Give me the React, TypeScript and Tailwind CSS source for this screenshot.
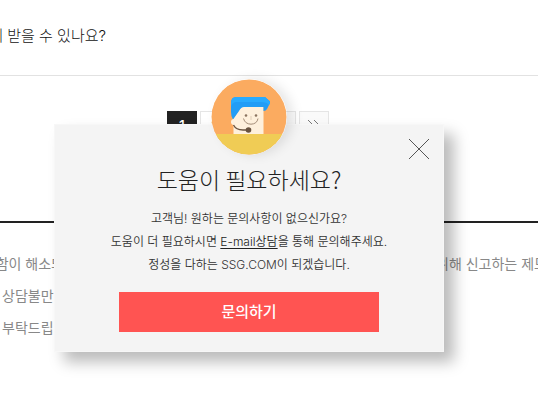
import React from "react";

function Avatar() {
  return (
    <svg
      viewBox="0 0 76 76"
      className="absolute left-1/2 -top-[46px] size-[76px] -translate-x-1/2 rounded-full shadow-[6px_0_12px_rgba(0,0,0,0.1)]"
      aria-hidden="true"
    >
      <defs>
        <clipPath id="avatar-disc">
          <circle cx="38" cy="38" r="37.5" />
        </clipPath>
      </defs>
      <g clipPath="url(#avatar-disc)">
        <rect width="76" height="76" fill="#fbab60" />
        <rect y="55" width="76" height="21" fill="#f0cc55" />
        <path d="M22 40 31 27H52.500V55H22.500V47Z" fill="#fef0dc" />
        <path
          d="M25 18H54L59 22.500V24L56 30Q55 32 52.500 32V28H33Q30 28 28 32L22 40.500Q20 38 20 33V24Q20 18 25 18Z"
          fill="#229df6"
        />
        <path d="M25 18H54L59 22.500V24L58 26Q56 23 50 23H26Q21 23 20 28V24Q20 18 25 18Z" fill="#28abff" />
        <circle cx="23" cy="43" r="3" fill="#fef0dc" />
        <circle cx="35" cy="36.500" r="1.300" fill="#8b7460" />
        <circle cx="45" cy="36.500" r="1.300" fill="#8b7460" />
        <path d="M40 37V41" stroke="#d9c5af" strokeWidth="0.8" />
        <path d="M32.500 39.500Q34 45 40 45.200Q46 45 47 39.500" fill="none" stroke="#a48d78" strokeWidth="1" />
        <path d="M22.500 46Q25 51 32 51H37" fill="none" stroke="#68523f" strokeWidth="1.3" />
        <circle cx="37.500" cy="51" r="2.800" fill="#68523f" />
      </g>
    </svg>
  );
}

function HelpDialog() {
  return (
    <section
      role="dialog"
      aria-labelledby="help-title"
      className="absolute left-[calc(50%-215px)] top-[124px] w-[390px] border border-[#f7f7f7] bg-[#f4f4f4] pb-[19px] pt-9 text-center text-[#333] shadow-[10px_10px_14px_rgba(0,0,0,0.27)]"
    >
      <Avatar />
      <button type="button" aria-label="닫기" className="absolute right-3.5 top-3.5 size-5">
        <svg viewBox="0 0 20 20" className="size-5" fill="none" stroke="#555" strokeWidth="1">
          <path d="M0 0 20 20M20 0 0 20" />
        </svg>
      </button>
      <h2 id="help-title" className="font-['Noto_Sans_CJK_KR',sans-serif] text-[23px] leading-9 font-light text-[#222]">
        도움이 필요하세요?
      </h2>
      <p className="mt-2.5 text-xs leading-[23px] font-[350]">
        고객님! 원하는 문의사항이 없으신가요?
        <br />
        도움이 더 필요하시면{" "}
        <a href="#email" className="text-[#222] underline underline-offset-2">
          E-mail상담
        </a>
        을 통해 문의해주세요.
        <br />
        정성을 다하는 SSG.COM이 되겠습니다.
      </p>
      <button
        type="button"
        className="mt-4 h-10 w-[260px] bg-[#ff5452] text-[15px] font-medium text-white"
      >
        문의하기
      </button>
    </section>
  );
}

const pageButton = "h-[30px] w-[30px] border border-[#e5e5e5] bg-white text-[#777]";
const stepButton = "h-[30px] w-[30px] border border-[#e5e5e5] bg-[#fafafa] text-[#777]";

export default function App() {
  return (
    <div className="relative min-h-screen overflow-hidden bg-white font-['Inter','Noto_Sans_CJK_KR',sans-serif]">
      <div className="flex h-[76px] items-center border-b border-[#e2e2e2] pb-[3px]">
        <p className="flex w-[106px] justify-end whitespace-nowrap text-[15px] font-light text-[#111]">
          게 받을 수 있나요?
        </p>
      </div>

      <nav aria-label="페이지" className="flex justify-center gap-[3px] pr-[42px] pt-[35px] text-sm">
        <button type="button" aria-current="page" className="h-[30px] w-[30px] bg-[#222] font-medium text-white">
          1
        </button>
        <button type="button" className={pageButton}>2</button>
        <button type="button" className={pageButton}>3</button>
        <button type="button" aria-label="다음" className={stepButton} />
        <button type="button" aria-label="마지막" className={stepButton}>
          <svg viewBox="0 0 28 28" className="w-7" fill="none" stroke="currentColor">
            <path d="m8 8 6 6-6 6M14 8l6 6-6 6" />
          </svg>
        </button>
      </nav>

      <div className="mt-20 border-t-2 border-[#222] pt-[25px] text-sm leading-8 whitespace-nowrap text-[#888]">
        <div className="flex">
          <p className="flex w-16 shrink-0 justify-end">함이 해소되</p>
          <p className="ml-auto flex w-[102px] shrink-0">위해 신고하는 제도</p>
        </div>
        <p className="pl-0.5">상담불만</p>
        <p className="pl-0.5">부탁드립</p>
      </div>

      <HelpDialog />
    </div>
  );
}
